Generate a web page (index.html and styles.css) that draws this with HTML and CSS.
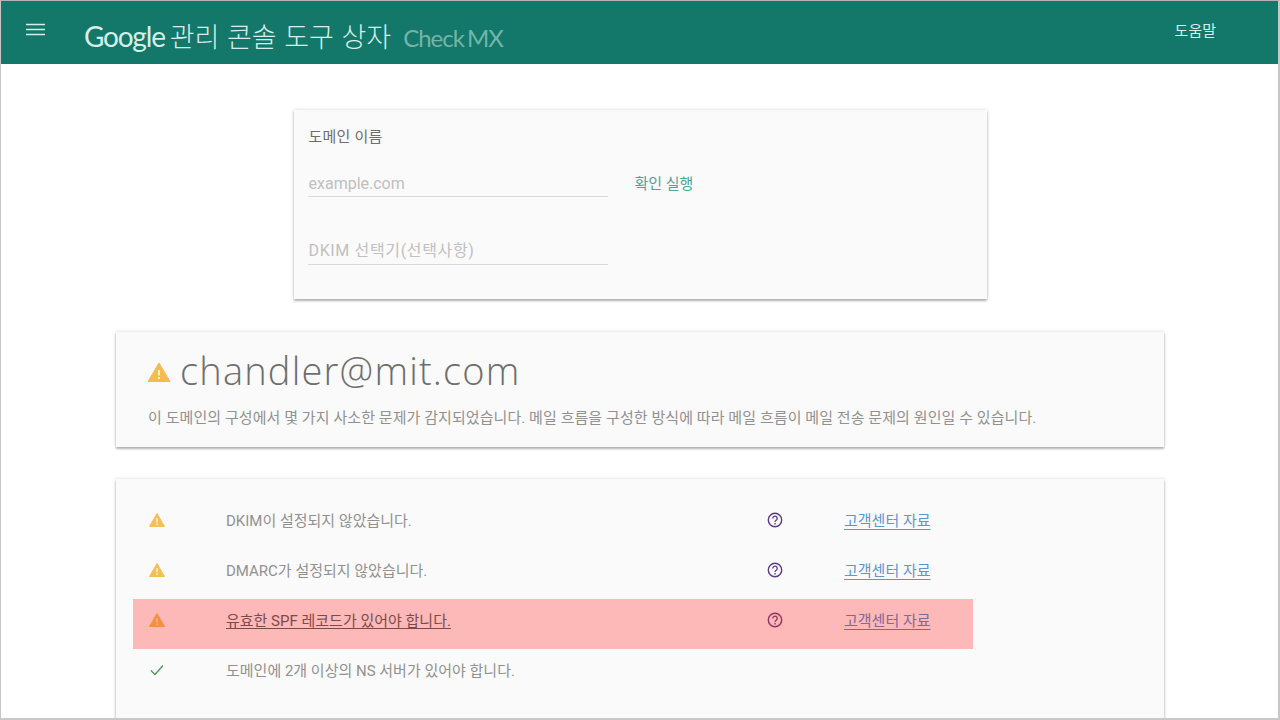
FILE: index.html
```html
<!DOCTYPE html>
<html lang="ko">
<head>
<meta charset="utf-8">
<title>Check MX</title>
<link rel="stylesheet" href="styles.css">
</head>
<body>
<div class="frame">
  <header class="topbar">
    <button class="menu" aria-label="menu">
      <svg width="20" height="14" viewBox="0 0 20 14"><path d="M0 1.500h19M0 6.500h19M0 11.500h19" stroke="#d4efe8" stroke-width="1.500" fill="none"/></svg>
    </button>
    <div class="brand"><span class="google">Google</span> <span class="suite">관리 콘솔 도구 상자</span><span class="tool">Check MX</span></div>
    <a class="help">도움말</a>
  </header>
  <main class="content">
    <section class="card form-card">
      <h2 class="form-title">도메인 이름</h2>
      <div class="form-row">
        <div class="field">example.com</div>
        <a class="run">확인 실행</a>
      </div>
      <div class="field second">DKIM 선택기(선택사항)</div>
    </section>
    <section class="card summary">
      <div class="summary-head">
        <svg class="warn-big" width="24" height="20" viewBox="0 0 24 20"><path d="M12 1 23 19.500H1z" fill="#f5bb4f" stroke="#f5bb4f" stroke-linejoin="round"/><path d="M11 8h2v5.500h-2zM11 15h2v2h-2z" fill="#fff3d8"/></svg>
        <h1 class="domain">chandler@mit.com</h1>
      </div>
      <p class="summary-text">이 도메인의 구성에서 몇 가지 사소한 문제가 감지되었습니다. 메일 흐름을 구성한 방식에 따라 메일 흐름이 메일 전송 문제의 원인일 수 있습니다.</p>
    </section>
    <section class="card results">
      <div class="row">
        <svg class="status" width="18" height="16" viewBox="0 0 18 16"><path d="M9 1.500 16.500 14.500H1.500z" fill="#f5bf58" stroke="#f5bf58" stroke-linejoin="round"/><path d="M8.300 6h1.400v4.500H8.300zM8.300 11.500h1.400v1.400H8.300z" fill="#fff3d8"/></svg>
        <span class="msg">DKIM이 설정되지 않았습니다.</span>
        <svg class="q" width="16" height="16" viewBox="0 0 16 16"><circle cx="8" cy="8" r="6.700" fill="none" stroke="#5c3a86" stroke-width="1.400"/><path d="M5.800 6.400a2.200 2.200 0 1 1 3.400 1.800c-.8.500-1.200.9-1.200 1.800" fill="none" stroke="#5c3a86" stroke-width="1.300"/><path d="M7.300 11h1.400v1.400H7.300z" fill="#5c3a86"/></svg>
        <a class="link">고객센터 자료</a>
      </div>
      <div class="row">
        <svg class="status" width="18" height="16" viewBox="0 0 18 16"><path d="M9 1.500 16.500 14.500H1.500z" fill="#f5bf58" stroke="#f5bf58" stroke-linejoin="round"/><path d="M8.300 6h1.400v4.500H8.300zM8.300 11.500h1.400v1.400H8.300z" fill="#fff3d8"/></svg>
        <span class="msg">DMARC가 설정되지 않았습니다.</span>
        <svg class="q" width="16" height="16" viewBox="0 0 16 16"><circle cx="8" cy="8" r="6.700" fill="none" stroke="#5c3a86" stroke-width="1.400"/><path d="M5.800 6.400a2.200 2.200 0 1 1 3.400 1.800c-.8.500-1.200.9-1.200 1.800" fill="none" stroke="#5c3a86" stroke-width="1.300"/><path d="M7.300 11h1.400v1.400H7.300z" fill="#5c3a86"/></svg>
        <a class="link">고객센터 자료</a>
      </div>
      <div class="row alert">
        <svg class="status" width="18" height="16" viewBox="0 0 18 16"><path d="M9 1.500 16.500 14.500H1.500z" fill="#f58f42" stroke="#f58f42" stroke-linejoin="round"/><path d="M8.300 6h1.400v4.500H8.300zM8.300 11.500h1.400v1.400H8.300z" fill="#fbb58a"/></svg>
        <span class="msg msg-link">유효한 SPF 레코드가 있어야 합니다.</span>
        <svg class="q" width="16" height="16" viewBox="0 0 16 16"><circle cx="8" cy="8" r="6.700" fill="none" stroke="#96325f" stroke-width="1.400"/><path d="M5.800 6.400a2.200 2.200 0 1 1 3.400 1.800c-.8.500-1.200.9-1.200 1.800" fill="none" stroke="#96325f" stroke-width="1.300"/><path d="M7.300 11h1.400v1.400H7.300z" fill="#96325f"/></svg>
        <a class="link">고객센터 자료</a>
      </div>
      <div class="row">
        <svg class="status" width="18" height="16" viewBox="0 0 18 16"><path d="M3 8.500 7 12.500 15 3.500" fill="none" stroke="#4c9a5b" stroke-width="1.400"/></svg>
        <span class="msg">도메인에 2개 이상의 NS 서버가 있어야 합니다.</span>
      </div>
    </section>
  </main>
</div>
</body>
</html>
```

FILE: styles.css
```css
* { box-sizing: border-box; }
html, body { margin: 0; height: 100%; overflow: hidden; }
body {
  font-family: Roboto, "Noto Sans CJK KR", sans-serif;
  background: #fff;
  color: #919191;
}
.frame {
  width: 1280px;
  height: 720px;
  border: 1px solid #b4b4b4;
  border-right: 2px solid #c8c8c8;
  border-bottom: 2px solid #c8c8c8;
  border-left-color: #c8c8c8;
  overflow: hidden;
  display: flex;
  flex-direction: column;
}
.topbar {
  height: 63px;
  flex: none;
  background: #13776a;
  display: flex;
  align-items: flex-start;
  color: #d4efe8;
}
.menu {
  margin: 22px 0 0 25px;
  padding: 0;
  width: 20px;
  height: 14px;
  border: 0;
  background: none;
  display: flex;
}
.brand {
  margin: 16px 0 0 38px;
  display: flex;
  align-items: baseline;
  white-space: nowrap;
}
.google {
  font-family: Lato, sans-serif;
  font-size: 28px;
  letter-spacing: -1.200px;
  color: #d4efe8;
}
.suite {
  font-family: "Noto Sans CJK KR", sans-serif;
  font-weight: 300;
  font-size: 27px;
  line-height: 38px;
  margin-left: 5px;
}
.tool {
  font-family: Lato, sans-serif;
  font-size: 24px;
  letter-spacing: -1px;
  word-spacing: -2px;
  color: #74b5a8;
  margin-left: 12px;
}
.help {
  margin: 20px 62px 0 auto;
  font-size: 15px;
  line-height: 20px;
}
.content {
  display: flex;
  flex-direction: column;
  align-items: center;
  padding: 46px 0 0 1px;
}
.card {
  background: #fafafa;
  box-shadow: 0 0 4px rgba(0,0,0,.16), 0 2px 2px rgba(0,0,0,.26);
  flex: none;
}
.form-card {
  width: 693px;
  height: 189px;
  padding: 17px 14px;
}
.form-title {
  margin: 0 0 0 1px;
  font-size: 15px;
  letter-spacing: .2px;
  font-weight: 400;
  line-height: 20px;
  color: #6e6e6e;
}
.form-row {
  display: flex;
  align-items: flex-start;
  margin-top: 23px;
}
.field {
  width: 300px;
  height: 27px;
  padding-left: 1px;
  border-bottom: 1px solid #d9d9d9;
  font-size: 16px;
  line-height: 28px;
  color: #c0c0c0;
}
.second {
  margin-top: 40px;
  line-height: 26px;
  letter-spacing: .65px;
}
.run {
  margin-left: 27px;
  font-size: 15px;
  line-height: 28px;
  color: #4aa598;
}
.summary {
  width: 1048px;
  height: 115px;
  margin-top: 33px;
  padding: 16px 31px;
}
.summary-head {
  display: flex;
  align-items: center;
  height: 46px;
}
.warn-big { margin-right: 9px; margin-top: 1px; }
.domain {
  margin: -3px 0 0;
  font-family: "Open Sans", sans-serif;
  font-weight: 300;
  font-size: 38px;
  line-height: 46px;
  letter-spacing: 1.200px;
  color: #6e6e6e;
}
.summary-text {
  margin: 14px 0 0 1px;
  font-size: 15px;
  letter-spacing: .07px;
  line-height: 20px;
  white-space: nowrap;
}
.results {
  width: 1048px;
  height: 260px;
  margin-top: 32px;
  padding: 20px 16px 0;
}
.row {
  width: 840px;
  height: 50px;
  margin-left: 1px;
  display: flex;
  align-items: center;
  padding: 0 0 9px 15px;
  font-size: 15px;
}
.status { flex: none; }
.msg { margin-left: 60px; width: 541px; flex: none; }
.msg-link { text-decoration: underline; text-underline-offset: 2px; color: #7d4a4c; }
.q { flex: none; }
.link {
  margin-left: 61px;
  color: #5a97d4;
  text-decoration: underline;
  text-underline-offset: 3px;
}
.alert { background: #fdb8b8; }
.alert .link { color: #7e6a9a; }
```
